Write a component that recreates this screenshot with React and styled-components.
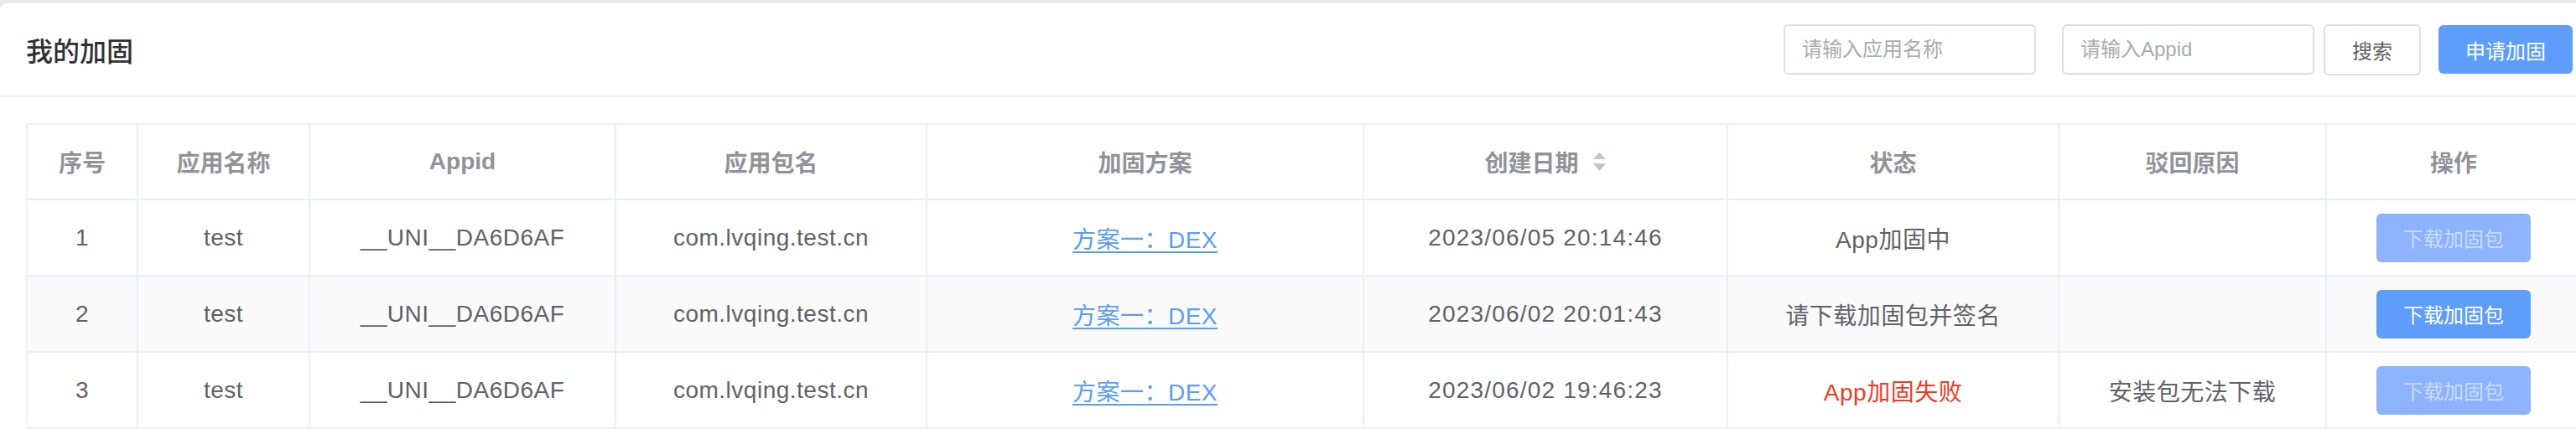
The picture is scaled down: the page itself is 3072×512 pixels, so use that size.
import React from 'react';
import styled, { createGlobalStyle } from 'styled-components';

const GlobalStyle = createGlobalStyle`
  html, body {
    margin: 0;
    padding: 0;
    background: #e9e9e9;
    overflow: hidden;
  }
  body {
    font-family: "Liberation Sans", "Noto Sans CJK SC", sans-serif;
  }
`;

const columns = [132, 205, 365, 371, 521, 434, 395, 319, 304];

const rows = [
  { id: 1, name: 'test', appid: '__UNI__DA6D6AF', pkg: 'com.lvqing.test.cn', plan: '方案一：DEX', date: '2023/06/05 20:14:46', status: 'App加固中', reason: '', ready: false },
  { id: 2, name: 'test', appid: '__UNI__DA6D6AF', pkg: 'com.lvqing.test.cn', plan: '方案一：DEX', date: '2023/06/02 20:01:43', status: '请下载加固包并签名', reason: '', ready: true },
  { id: 3, name: 'test', appid: '__UNI__DA6D6AF', pkg: 'com.lvqing.test.cn', plan: '方案一：DEX', date: '2023/06/02 19:46:23', status: 'App加固失败', reason: '安装包无法下载', ready: false, failed: true },
];

const SortIcon = () => (
  <svg width="17" height="22" viewBox="0 0 17 22">
    <path d="M8.5 0 L16 8 L1 8 Z" fill="#c0c4cc" />
    <path d="M1 13 L16 13 L8.5 22 Z" fill="#c0c4cc" />
  </svg>
);

const App = () => {
  return (
    <>
      <GlobalStyle />
      <Page>
        <Card>
          <Header>
            <Title>我的加固</Title>
            <Toolbar>
              <SearchInput placeholder="请输入应用名称" />
              <SearchInput placeholder="请输入Appid" $ml={31} />
              <PlainButton $ml={11}>搜索</PlainButton>
              <PrimaryButton $ml={21}>申请加固</PrimaryButton>
            </Toolbar>
          </Header>

          <Content>
            <Table>
              <colgroup>
                {columns.map((w, i) => (
                  <col key={i} style={{ width: w }} />
                ))}
              </colgroup>
              <thead>
                <tr>
                  <Th>序号</Th>
                  <Th>应用名称</Th>
                  <Th>Appid</Th>
                  <Th>应用包名</Th>
                  <Th>加固方案</Th>
                  <Th>
                    <SortLabel>
                      创建日期
                      <SortIcon />
                    </SortLabel>
                  </Th>
                  <Th>状态</Th>
                  <Th>驳回原因</Th>
                  <Th>操作</Th>
                </tr>
              </thead>
              <tbody>
                {rows.map((row, i) => (
                  <Row key={row.id} $striped={i % 2 === 1}>
                    <Td>{row.id}</Td>
                    <Td>{row.name}</Td>
                    <Td>{row.appid}</Td>
                    <Td>{row.pkg}</Td>
                    <Td>
                      <PlanLink href="#">{row.plan}</PlanLink>
                    </Td>
                    <Td $wide>{row.date}</Td>
                    <Td $danger={row.failed}>{row.status}</Td>
                    <Td>{row.reason}</Td>
                    <Td>
                      <DownloadButton disabled={!row.ready}>下载加固包</DownloadButton>
                    </Td>
                  </Row>
                ))}
              </tbody>
            </Table>
          </Content>
        </Card>
      </Page>
    </>
  );
};

const Page = styled.div`
  padding-top: 4px;
`;

const Card = styled.div`
  width: 3110px;
  background: #fff;
  border-top-left-radius: 8px;
`;

const Header = styled.div`
  height: 110px;
  display: flex;
  align-items: center;
  justify-content: space-between;
  padding: 0 42px 0 31px;
  border-bottom: 2px solid #f0f0f0;
`;

const Title = styled.div`
  font-size: 32px;
  font-weight: 500;
  color: #303133;
`;

const Toolbar = styled.div`
  display: flex;
  align-items: center;
`;

const SearchInput = styled.input`
  box-sizing: border-box;
  width: 301px;
  height: 60px;
  margin-left: ${(p) => p.$ml || 0}px;
  padding: 0 20px;
  border: 2px solid #dcdfe6;
  border-radius: 6px;
  font-family: inherit;
  font-size: 24px;
  color: #606266;
  outline: none;

  &::placeholder {
    color: #a8abb2;
  }
`;

const PlainButton = styled.button`
  box-sizing: border-box;
  height: 61px;
  width: 116px;
  margin-left: ${(p) => p.$ml || 0}px;
  border: 2px solid #dcdfe6;
  border-radius: 6px;
  background: #fff;
  color: #606266;
  font-family: inherit;
  font-size: 24px;
`;

const PrimaryButton = styled.button`
  box-sizing: border-box;
  height: 58px;
  width: 160px;
  margin-left: ${(p) => p.$ml || 0}px;
  border: none;
  border-radius: 6px;
  background: #5e9df9;
  color: #fff;
  font-family: inherit;
  font-size: 24px;
`;

const Content = styled.div`
  padding: 31px 0 0 31px;
`;

const Table = styled.table`
  width: 3046px;
  table-layout: fixed;
  border-collapse: collapse;
`;

const Th = styled.th`
  height: 88px;
  padding: 0;
  border: 2px solid #ebeef5;
  font-size: 28px;
  font-weight: 700;
  color: #909399;
  text-align: center;
`;

const SortLabel = styled.span`
  display: inline-flex;
  align-items: center;
  gap: 16px;
`;

const Row = styled.tr`
  background: ${(p) => (p.$striped ? '#fafafa' : '#fff')};
`;

const Td = styled.td`
  height: 89px;
  padding: 0;
  border: 2px solid #ebeef5;
  font-size: 28px;
  letter-spacing: ${(p) => (p.$wide ? '1.2px' : '0.5px')};
  color: ${(p) => (p.$danger ? '#ef3b23' : '#606266')};
  text-align: center;
  white-space: nowrap;
`;

const PlanLink = styled.a`
  color: #5a9cf8;
  text-decoration: underline;
  text-underline-offset: 4px;
  text-decoration-thickness: 2px;
`;

const DownloadButton = styled.button`
  width: 184px;
  height: 58px;
  border: none;
  border-radius: 6px;
  background: ${(p) => (p.disabled ? '#8cb3fb' : '#5e9df9')};
  color: ${(p) => (p.disabled ? 'rgba(255, 255, 255, 0.55)' : '#fff')};
  font-family: inherit;
  font-size: 24px;
  letter-spacing: 0;
  vertical-align: middle;
`;

export default App;
